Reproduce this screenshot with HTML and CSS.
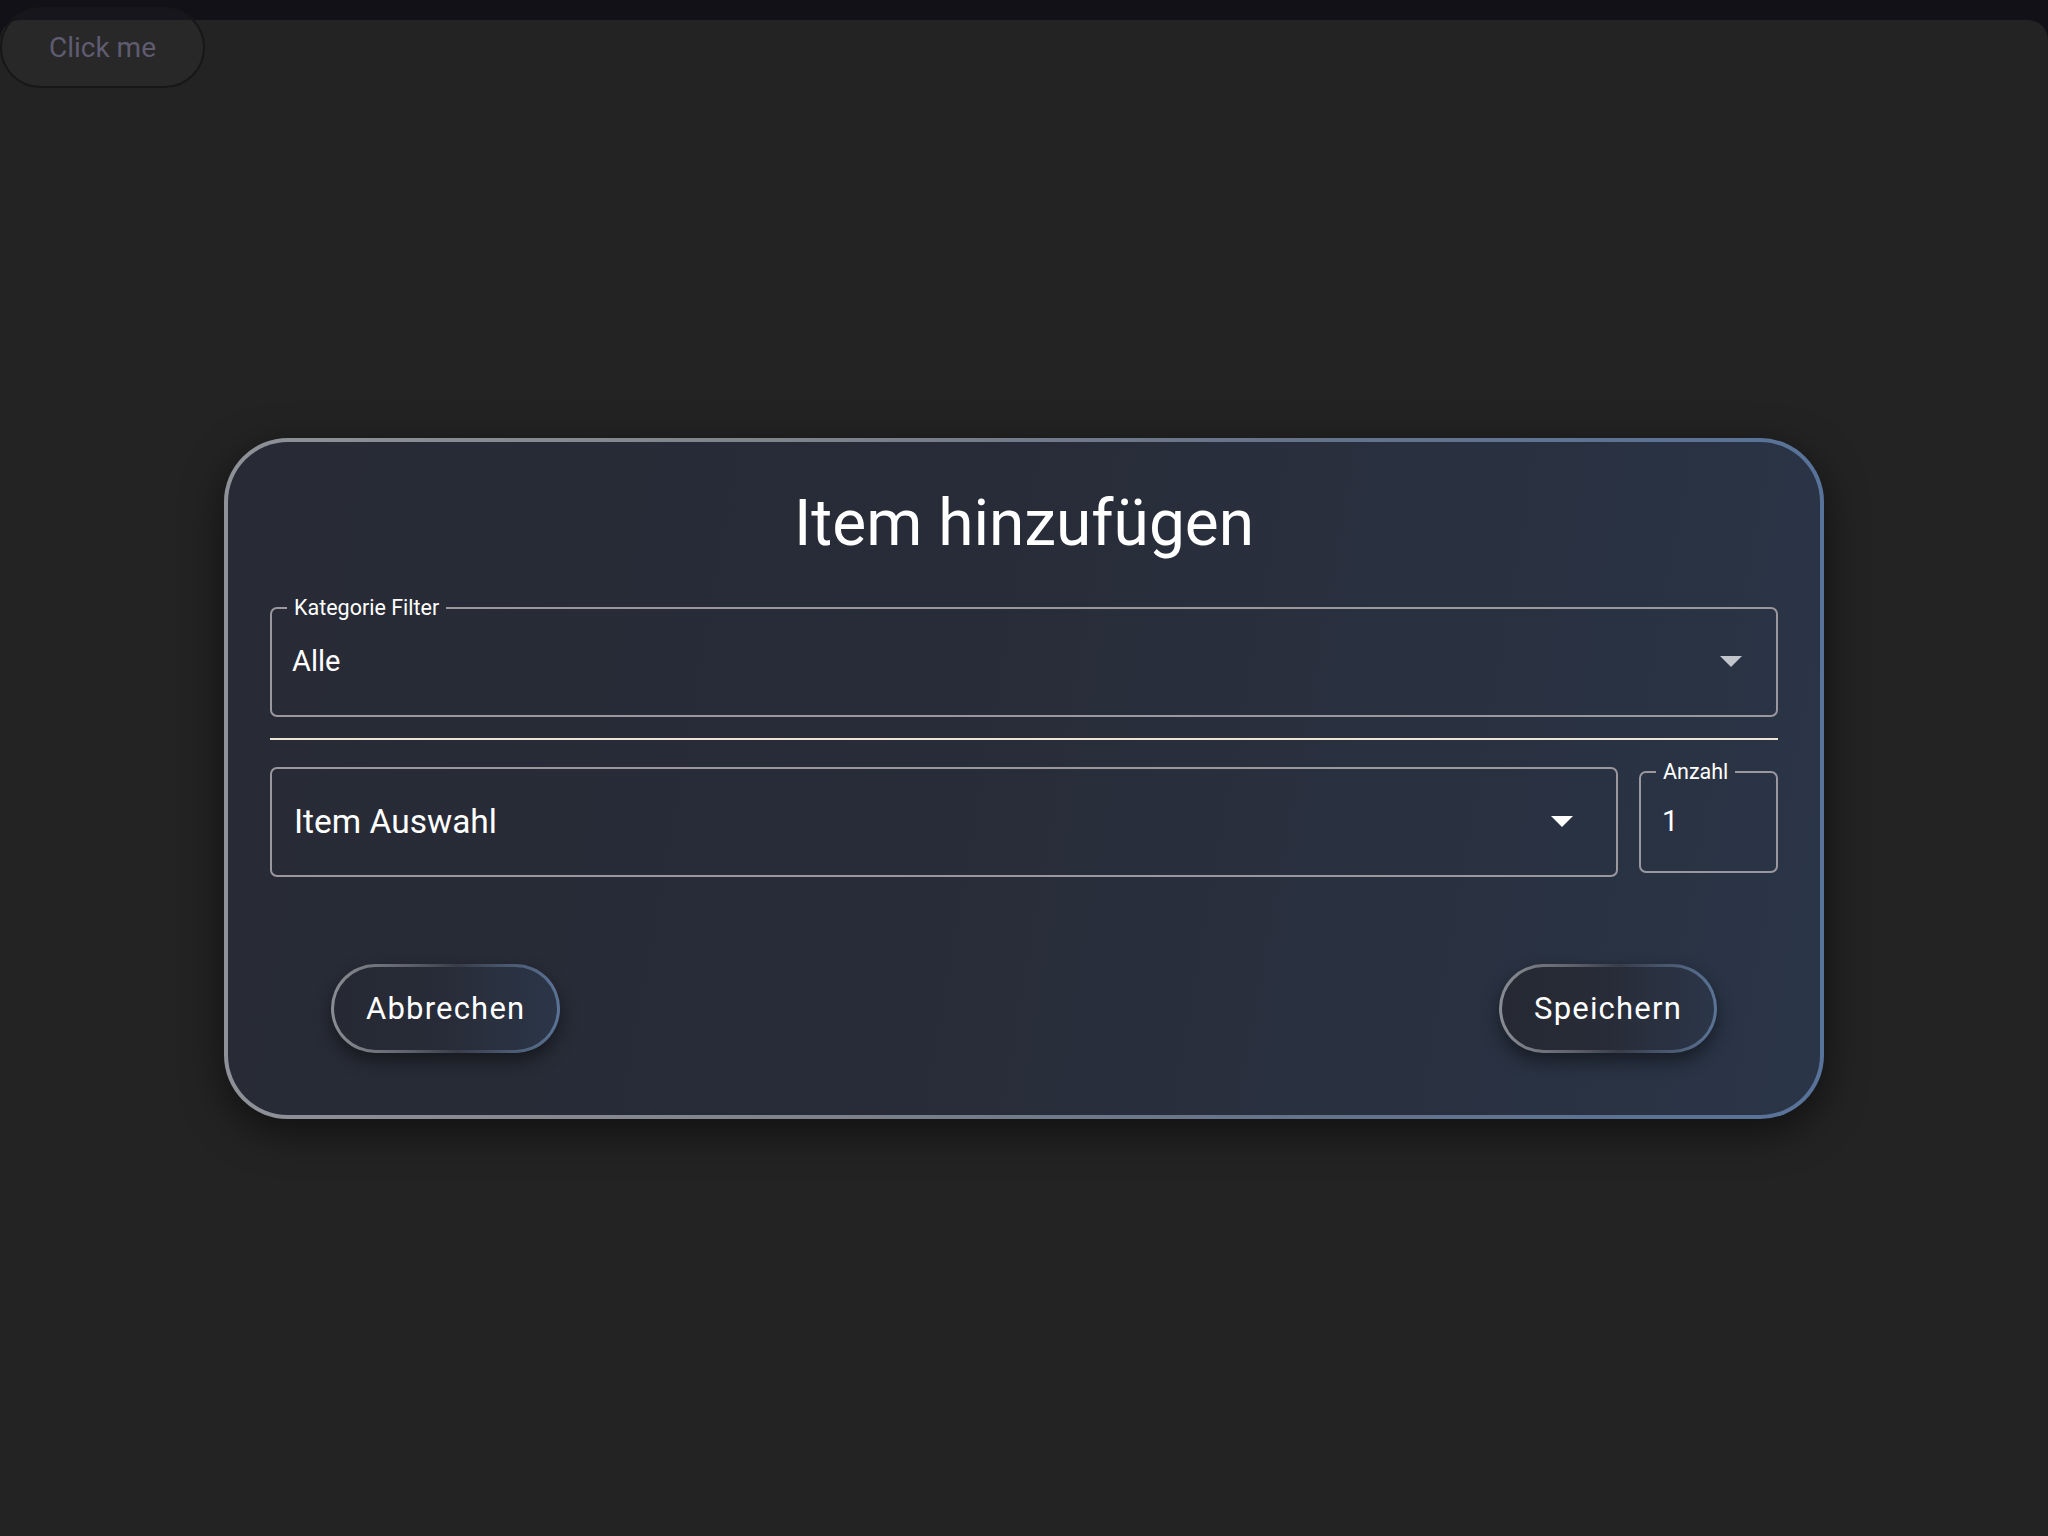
FILE: index.html
```html
<!DOCTYPE html>
<html lang="de">
<head>
<meta charset="utf-8">
<title>Item hinzufügen</title>
<link rel="stylesheet" href="styles.css">
</head>
<body>
<div class="app">
  <button class="click-btn">Click me</button>
  <main class="main">
    <section class="dialog">
      <h2 class="dialog-title">Item hinzufügen</h2>

      <div class="field field-category">
        <span class="field-value">Alle</span>
        <svg class="arrow arrow-dim" viewBox="0 0 22 11" width="22" height="11"><path d="M0 0 L22 0 L11 11 Z"/></svg>
        <fieldset class="outline"><legend>Kategorie Filter</legend></fieldset>
      </div>

      <hr class="divider">

      <div class="item-row">
        <div class="field field-item">
          <span class="field-value field-value-large">Item Auswahl</span>
          <svg class="arrow" viewBox="0 0 22 11" width="22" height="11"><path d="M0 0 L22 0 L11 11 Z"/></svg>
        </div>
        <div class="field field-qty">
          <span class="field-value">1</span>
          <fieldset class="outline"><legend>Anzahl</legend></fieldset>
        </div>
      </div>

      <div class="actions">
        <button class="pill">Abbrechen</button>
        <button class="pill">Speichern</button>
      </div>
    </section>
  </main>
</div>
</body>
</html>
```

FILE: styles.css
```css
* { box-sizing: border-box; }

html, body {
  margin: 0;
  padding: 0;
}

body {
  background: #121117;
  font-family: Roboto, "Liberation Sans", Arial, sans-serif;
  color: #ffffff;
}

.app {
  position: relative;
  padding-top: 20px;
}

.click-btn {
  position: absolute;
  top: 7px;
  left: 0;
  width: 205px;
  height: 81px;
  border-radius: 41px;
  border: 2px solid #17171a;
  background: rgba(255, 255, 255, 0.025);
  color: #5f5b70;
  font-family: Roboto, "Liberation Sans", sans-serif;
  font-size: 28px;
  padding: 0;
  z-index: 2;
}

.main {
  min-height: 1516px;
  background: #232323;
  border-radius: 20px 20px 0 0;
  display: flex;
  align-items: center;
  justify-content: center;
}

.dialog {
  width: 1600px;
  border: 4px solid transparent;
  border-radius: 64px;
  background:
    linear-gradient(100deg, #282b36 0%, #282c38 45%, #2a3547 100%) padding-box,
    linear-gradient(90deg, #8e9197 0%, #7f838a 35%, #66738a 65%, #58739a 100%) border-box;
  box-shadow: 0 12px 40px rgba(0, 0, 0, 0.55);
  padding: 44px 42px 62px;
  display: flex;
  flex-direction: column;
}

.dialog-title {
  margin: 0 0 45px;
  text-align: center;
  font-size: 64px;
  line-height: 76px;
  font-weight: 400;
  color: #ffffff;
}

.field {
  position: relative;
  display: flex;
  align-items: center;
  color: #ffffff;
}

.field-value {
  font-size: 29px;
  line-height: 1;
}

.field-value-large {
  font-size: 33.5px;
}

.outline {
  position: absolute;
  top: -11px;
  left: 0;
  right: 0;
  bottom: 0;
  margin: 0;
  padding: 0 15px;
  border: 2px solid #9a979f;
  border-radius: 7px;
  pointer-events: none;
}

.outline legend {
  padding: 0 7px;
  font-size: 21.5px;
  line-height: 24px;
  color: #ffffff;
}

.field-category {
  height: 110px;
  padding: 0 36px 0 22px;
  justify-content: space-between;
}

.arrow {
  fill: #ffffff;
  flex: none;
}

.arrow-dim {
  fill: #c2c5cb;
}

.divider {
  margin: 21px 0 0;
  border: 0;
  height: 2px;
  background: #efe4d4;
}

.item-row {
  margin-top: 27px;
  display: flex;
  align-items: center;
  gap: 21px;
}

.field-item {
  flex: 1;
  height: 110px;
  border: 2px solid #9a979f;
  border-radius: 7px;
  padding: 0 43px 0 22px;
  justify-content: space-between;
}

.field-qty {
  width: 139px;
  height: 102px;
  padding: 0 23px;
}

.actions {
  margin-top: 87px;
  padding: 0 61px;
  display: flex;
  justify-content: space-between;
}

.pill {
  height: 89px;
  padding: 0 32px;
  border: 3px solid transparent;
  border-radius: 45px;
  background:
    linear-gradient(90deg, #262933 0%, #282c38 50%, #2b3648 100%) padding-box,
    linear-gradient(90deg, #8a8d93 0%, #5d6069 35%, #393d4a 55%, #5b7497 100%) border-box;
  box-shadow: 0 8px 18px rgba(0, 0, 0, 0.45);
  color: #ffffff;
  font-family: Roboto, "Liberation Sans", sans-serif;
  font-size: 31px;
  font-weight: 400;
  letter-spacing: 1.2px;
  display: inline-flex;
  align-items: center;
}
```
